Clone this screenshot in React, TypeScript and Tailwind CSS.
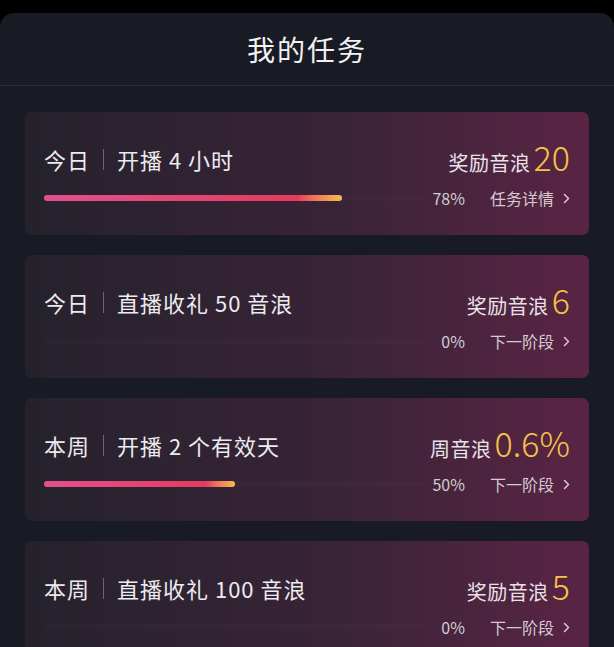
import React from "react";

type Task = {
  period: string;
  name: string;
  rewardLabel: string;
  reward: string;
  percent: number;
  link: string;
};

const tasks: Task[] = [
  { period: "今日", name: "开播 4 小时", rewardLabel: "奖励音浪", reward: "20", percent: 78, link: "任务详情" },
  { period: "今日", name: "直播收礼 50 音浪", rewardLabel: "奖励音浪", reward: "6", percent: 0, link: "下一阶段" },
  { period: "本周", name: "开播 2 个有效天", rewardLabel: "周音浪", reward: "0.6%", percent: 50, link: "下一阶段" },
  { period: "本周", name: "直播收礼 100 音浪", rewardLabel: "奖励音浪", reward: "5", percent: 0, link: "下一阶段" },
];

function TaskCard({ task }: { task: Task }) {
  return (
    <div className="h-[123px] shrink-0 rounded-[7px] bg-linear-to-r from-[#25222c] via-[#392337] via-55% to-[#5a2444] px-[19px]">
      <div className="mt-[29px] flex h-[36px] items-center justify-between">
        <div className="flex items-center text-[22px] tracking-[1px] text-[#ecebef]">
          <span>{task.period}</span>
          <span className="mx-[13px] h-[21px] w-px bg-[#6b6673]" />
          <span>{task.name}</span>
        </div>
        <div className="flex items-baseline gap-[3px]">
          <span className="text-[20px] tracking-[0.5px] text-[#e9e1e8]">{task.rewardLabel}</span>
          <span className="text-[34px] leading-none font-light text-[#f6c349]">{task.reward}</span>
        </div>
      </div>
      <div className="mt-[11px] flex h-[20px] items-center justify-between">
        <div className="h-[6px] w-[382px] rounded-full bg-white/[0.015]">
          {task.percent > 0 && (
            <div
              className="h-full rounded-full bg-linear-to-r from-[#e3508c] via-[#e33b5e] via-85% to-[#f4bd4c]"
              style={{ width: `${task.percent}%` }}
            />
          )}
        </div>
        <div className="flex items-center gap-[25px] text-[16px] text-[#d4cbd3]">
          <span>{task.percent}%</span>
          <span className="flex items-center gap-[9px]">
            {task.link}
            <svg width="7" height="11" viewBox="0 0 7 11" fill="none">
              <path d="M1.5 1.5 L5.5 5.5 L1.5 9.5" stroke="#d4cbd3" strokeWidth="1.5" strokeLinecap="round" strokeLinejoin="round" />
            </svg>
          </span>
        </div>
      </div>
    </div>
  );
}

export default function App() {
  return (
    <div
      className="h-[647px] overflow-hidden bg-black pt-[13px]"
      style={{ fontFamily: '"Noto Sans CJK SC", "Noto Sans", sans-serif' }}
    >
      <div className="h-full rounded-t-[14px] bg-[#181b23]">
        <div className="flex h-[73px] items-center justify-center border-b border-[#2b2e36] text-[28px] tracking-[2px] text-[#f2f2f4]">
          我的任务
        </div>
        <div className="flex flex-col gap-[20px] px-[25px] pt-[26px]">
          {tasks.map((t, i) => (
            <TaskCard key={i} task={t} />
          ))}
        </div>
      </div>
    </div>
  );
}
